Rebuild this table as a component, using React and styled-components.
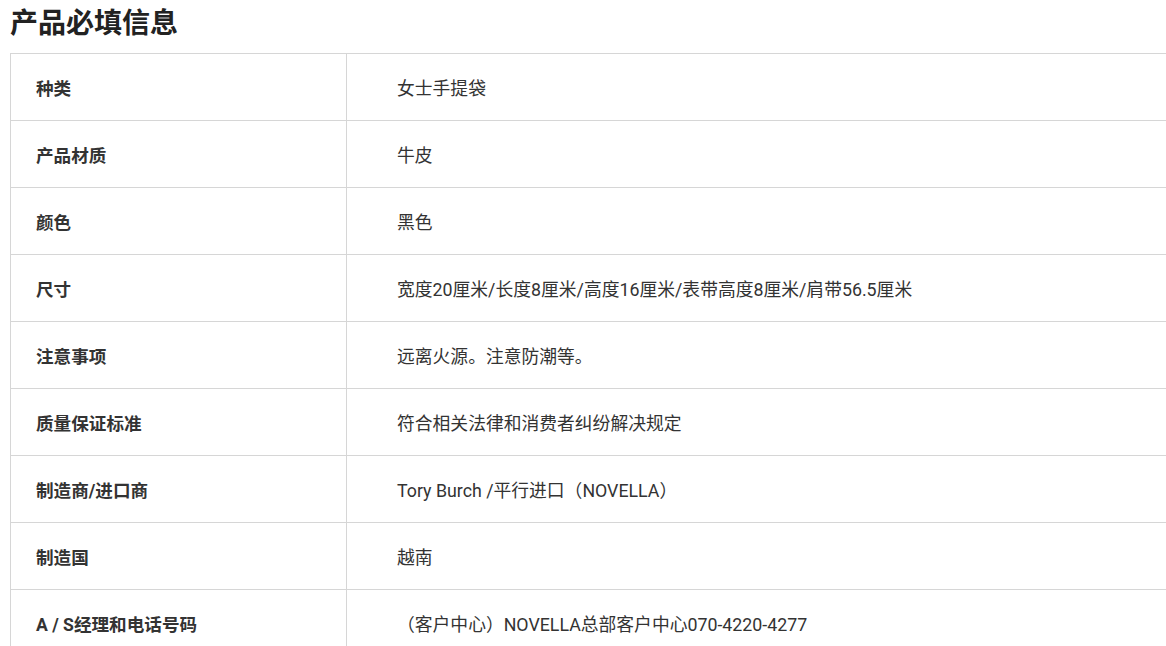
import React from 'react';
import styled, { createGlobalStyle } from 'styled-components';

const GlobalStyle = createGlobalStyle`
    html, body {
        margin: 0;
        padding: 0;
        overflow: hidden;
        background: #fff;
    }
    body {
        font-family: Roboto, "Noto Sans CJK SC", sans-serif;
        color: #333;
    }
`;

const Page = styled.div`
    padding: 2px 0 0 10px;
`;

const Heading = styled.h2`
    margin: 0 0 13px;
    font-size: 28px;
    line-height: 38px;
    font-weight: 700;
    color: #222;
    font-family: "Noto Sans CJK SC", sans-serif;
`;

const Table = styled.div`
    width: 1170px;
    border-top: 1px solid #d6d6d6;
    border-left: 1px solid #d6d6d6;
`;

const Row = styled.div`
    display: grid;
    grid-template-columns: 336px 1fr;
    height: 67px;
    border-bottom: 1px solid #d6d6d6;
    box-sizing: border-box;
`;

const Label = styled.div`
    display: flex;
    align-items: center;
    padding: 1px 0 0 25px;
    border-right: 1px solid #d6d6d6;
    font-size: 17.6px;
    font-weight: 700;
    color: #333;
`;

const Value = styled.div`
    display: flex;
    align-items: center;
    padding: 0 0 0 50px;
    font-size: 17.8px;
    color: #333;
`;

const rows = [
    ['种类', '女士手提袋'],
    ['产品材质', '牛皮'],
    ['颜色', '黑色'],
    ['尺寸', '宽度20厘米/长度8厘米/高度16厘米/表带高度8厘米/肩带56.5厘米'],
    ['注意事项', '远离火源。注意防潮等。'],
    ['质量保证标准', '符合相关法律和消费者纠纷解决规定'],
    ['制造商/进口商', 'Tory Burch /平行进口（NOVELLA）'],
    ['制造国', '越南'],
    ['A / S经理和电话号码', '（客户中心）NOVELLA总部客户中心070-4220-4277'],
];

const App = () => (
    <Page>
        <GlobalStyle />
        <Heading>产品必填信息</Heading>
        <Table>
            {rows.map(([label, value]) => (
                <Row key={label}>
                    <Label>{label}</Label>
                    <Value>{value}</Value>
                </Row>
            ))}
        </Table>
    </Page>
);

export default App;
